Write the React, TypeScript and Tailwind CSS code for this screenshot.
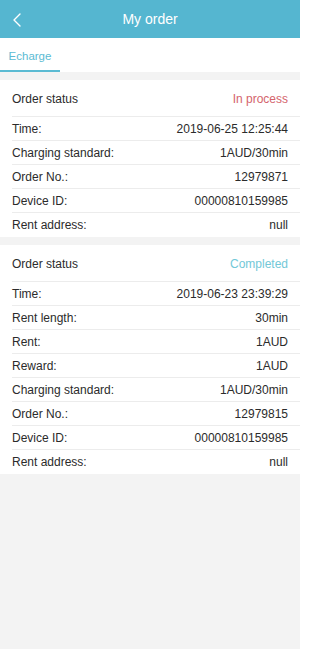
import React from 'react';

type Row = { label: string; value: string };

interface Order {
  status: string;
  done: boolean;
  rows: Row[];
}

const orders: Order[] = [
  {
    status: 'In process',
    done: false,
    rows: [
      { label: 'Time:', value: '2019-06-25 12:25:44' },
      { label: 'Charging standard:', value: '1AUD/30min' },
      { label: 'Order No.:', value: '12979871' },
      { label: 'Device ID:', value: '00000810159985' },
      { label: 'Rent address:', value: 'null' },
    ],
  },
  {
    status: 'Completed',
    done: true,
    rows: [
      { label: 'Time:', value: '2019-06-23 23:39:29' },
      { label: 'Rent length:', value: '30min' },
      { label: 'Rent:', value: '1AUD' },
      { label: 'Reward:', value: '1AUD' },
      { label: 'Charging standard:', value: '1AUD/30min' },
      { label: 'Order No.:', value: '12979815' },
      { label: 'Device ID:', value: '00000810159985' },
      { label: 'Rent address:', value: 'null' },
    ],
  },
];

const OrderCard: React.FC<{ order: Order }> = ({ order }) => (
  <div className="bg-white pl-3">
    <div className="flex h-[37px] items-center justify-between border-b border-[#ececec] pr-3 pt-[1px]">
      <span className="text-[#2b2b2b]">Order status</span>
      <span className={order.done ? 'text-[#72c8d8]' : 'text-[#d4646c]'}>{order.status}</span>
    </div>
    {order.rows.map((row, i) => (
      <div
        key={row.label}
        className={`flex h-[24px] items-center justify-between pr-3 ${i < order.rows.length - 1 ? 'border-b border-[#ececec]' : ''}`}
      >
        <span className="text-[#2b2b2b]">{row.label}</span>
        <span className="text-[#2b2b2b]">{row.value}</span>
      </div>
    ))}
  </div>
);

const App: React.FC = () => {
  return (
    <div
      className="min-h-[649px] w-[300px] bg-[#f3f3f3] text-[12px]"
      style={{ fontFamily: '"Liberation Sans", Arial, sans-serif' }}
    >
      <header className="relative flex h-[38px] items-center justify-center bg-[#55b6d0]">
        <svg className="absolute left-[12px] top-[13px]" width="10" height="14" viewBox="0 0 10 14" fill="none">
          <path d="M8 1 L2 7 L8 13" stroke="#fff" strokeWidth="1.4" strokeLinecap="round" strokeLinejoin="round" />
        </svg>
        <h1 className="text-[14px] text-white">My order</h1>
      </header>
      <nav className="flex h-[34px] bg-white">
        <div className="flex w-[60px] flex-col items-center justify-end">
          <span className="pb-[5px] text-[11.5px] text-[#5bbbd3]">Echarge</span>
          <div className="h-[2px] w-full bg-[#5bbbd3]" />
        </div>
      </nav>
      <main className="flex flex-col gap-2 pt-2">
        {orders.map(order => (
          <OrderCard key={order.status} order={order} />
        ))}
      </main>
    </div>
  );
};

export default App;
